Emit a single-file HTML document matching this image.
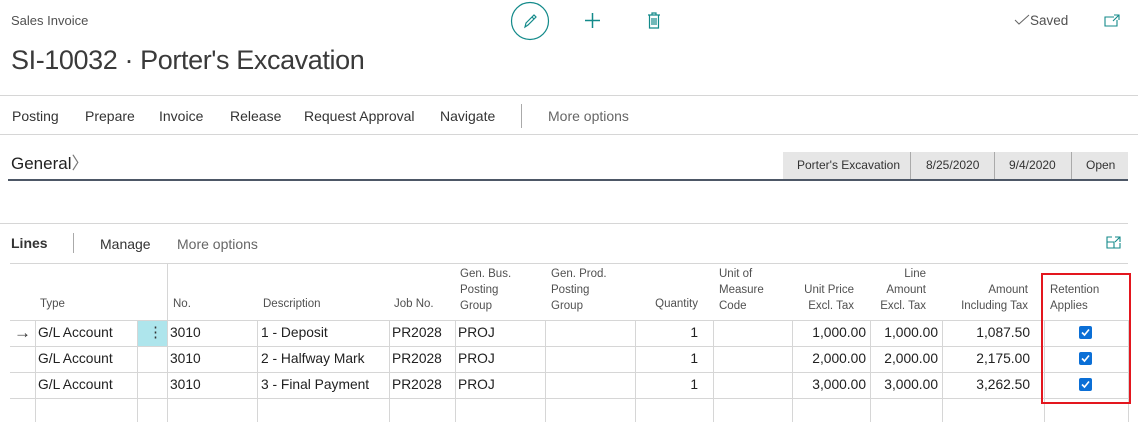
<!DOCTYPE html>
<html><head><meta charset="utf-8"><style>
*{margin:0;padding:0;box-sizing:border-box}
body{width:1138px;height:422px;overflow:hidden;background:#fff;font-family:"Liberation Sans",sans-serif;color:#212121;position:relative}
.a{position:absolute;white-space:nowrap}
.hl{position:absolute;height:1px;background:#d6d6d6}
.vl{position:absolute;width:1px;background:#d6d6d6}
.h{position:absolute;font-size:11.5px;color:#505050;line-height:16px}
.c{position:absolute;font-size:13.8px;line-height:26px}
.r{text-align:right}
</style></head><body>
<div class="a" style="left:11px;top:13px;font-size:13px;color:#505050">Sales Invoice</div>
<svg class="a" style="left:510px;top:1px" width="40" height="40"><circle cx="20" cy="20" r="18.5" fill="none" stroke="#138a8a" stroke-width="1.2"/><path d="M15 26 L16 22 L24 14 L26 16 L18 24 Z M22 16 L24 18" fill="none" stroke="#138a8a" stroke-width="1.2"/></svg>
<svg class="a" style="left:584px;top:12px" width="17" height="17"><path d="M8.5 1V16M1 8.5H16" stroke="#138a8a" stroke-width="1.5"/></svg>
<svg class="a" style="left:647px;top:12px" width="14" height="17"><path d="M1 3H13M5 3V1H9V3M2.5 3V16H11.5V3M5 6V13M7 6V13M9 6V13" fill="none" stroke="#138a8a" stroke-width="1.2"/></svg>
<svg class="a" style="left:1014px;top:14px" width="16" height="12"><path d="M1 6L5 10L15 1" fill="none" stroke="#666" stroke-width="1"/></svg>
<div class="a" style="left:1030px;top:13px;font-size:13.5px;color:#505050">Saved</div>
<svg class="a" style="left:1104px;top:14px" width="16" height="13"><path d="M10 3H1V12H13V6M10 1H15V6M15 1L9 7" fill="none" stroke="#138a8a" stroke-width="1.1"/></svg>
<div class="a" style="left:11px;top:45px;font-size:27px;color:#3a3a3a;letter-spacing:-0.4px">SI-10032 · Porter's Excavation</div>
<div class="hl" style="left:0;top:95px;width:1138px"></div>
<div class="a" style="left:12px;top:108px;font-size:14px;color:#333">Posting</div>
<div class="a" style="left:85px;top:108px;font-size:14px;color:#333">Prepare</div>
<div class="a" style="left:159px;top:108px;font-size:14px;color:#333">Invoice</div>
<div class="a" style="left:230px;top:108px;font-size:14px;color:#333">Release</div>
<div class="a" style="left:304px;top:108px;font-size:14px;color:#333">Request Approval</div>
<div class="a" style="left:440px;top:108px;font-size:14px;color:#333">Navigate</div>
<div class="vl" style="left:521px;top:104px;height:24px;background:#aaa"></div>
<div class="a" style="left:548px;top:108px;font-size:14px;color:#666">More options</div>
<div class="hl" style="left:0;top:134px;width:1138px"></div>
<div class="a" style="left:11px;top:154px;font-size:17px;color:#212121;line-height:20px">General<span style="color:#777">〉</span></div>
<div class="a" style="left:783px;top:152px;width:345px;height:27px;background:#e6e6e6;font-size:12px;color:#333;line-height:27px">
<span class="a" style="left:14px">Porter's Excavation</span>
<span class="a" style="left:127px;top:0;width:1px;height:27px;background:#aaa"></span>
<span class="a" style="left:143px">8/25/2020</span>
<span class="a" style="left:211px;top:0;width:1px;height:27px;background:#aaa"></span>
<span class="a" style="left:226px">9/4/2020</span>
<span class="a" style="left:288px;top:0;width:1px;height:27px;background:#aaa"></span>
<span class="a" style="left:303px">Open</span></div>
<div class="a" style="left:8px;top:179px;width:1120px;height:2px;background:#4d5766"></div>
<div class="hl" style="left:0;top:223px;width:1128px"></div>
<div class="a" style="left:11px;top:235px;font-size:14px;font-weight:bold;color:#333">Lines</div>
<div class="vl" style="left:73px;top:233px;height:20px;background:#aaa"></div>
<div class="a" style="left:100px;top:236px;font-size:14px;color:#333">Manage</div>
<div class="a" style="left:177px;top:236px;font-size:14px;color:#666">More options</div>
<svg class="a" style="left:1106px;top:236px" width="15" height="13"><path d="M6 1H1V12H14V7M1 6H8V12M9 1H14V6M14 1L9 6" fill="none" stroke="#138a8a" stroke-width="1.1"/></svg>
<div class="hl" style="left:10px;top:263px;width:1118px"></div>
<div class="a" style="left:137px;top:320px;width:30px;height:26px;background:#aee5ec"></div>
<div class="a" style="left:148px;top:320px;font-size:15px;line-height:26px;color:#333">⋮</div>
<div class="hl" style="left:10px;top:320px;width:1118px"></div>
<div class="hl" style="left:10px;top:346px;width:1118px"></div>
<div class="hl" style="left:10px;top:372px;width:1118px"></div>
<div class="hl" style="left:10px;top:398px;width:1118px"></div>
<div class="vl" style="left:35px;top:320px;height:102px"></div>
<div class="vl" style="left:137px;top:320px;height:102px"></div>
<div class="vl" style="left:167px;top:263px;height:159px"></div>
<div class="vl" style="left:257px;top:320px;height:102px"></div>
<div class="vl" style="left:389px;top:320px;height:102px"></div>
<div class="vl" style="left:455px;top:320px;height:102px"></div>
<div class="vl" style="left:545px;top:320px;height:102px"></div>
<div class="vl" style="left:635px;top:320px;height:102px"></div>
<div class="vl" style="left:713px;top:320px;height:102px"></div>
<div class="vl" style="left:792px;top:320px;height:102px"></div>
<div class="vl" style="left:870px;top:320px;height:102px"></div>
<div class="vl" style="left:942px;top:320px;height:102px"></div>
<div class="vl" style="left:1044px;top:320px;height:102px"></div>
<div class="vl" style="left:1128px;top:320px;height:102px"></div>
<div class="h" style="left:40px;top:296px">Type</div>
<div class="h" style="left:173px;top:296px">No.</div>
<div class="h" style="left:263px;top:296px">Description</div>
<div class="h" style="left:394px;top:296px">Job No.</div>
<div class="h" style="left:460px;top:266px">Gen. Bus.<br>Posting<br>Group</div>
<div class="h" style="left:551px;top:266px">Gen. Prod.<br>Posting<br>Group</div>
<div class="h r" style="left:636px;width:62px;top:296px">Quantity</div>
<div class="h" style="left:719px;top:266px">Unit of<br>Measure<br>Code</div>
<div class="h r" style="left:790px;width:64px;top:282px">Unit Price<br>Excl. Tax</div>
<div class="h r" style="left:860px;width:66px;top:266px">Line<br>Amount<br>Excl. Tax</div>
<div class="h r" style="left:940px;width:88px;top:282px">Amount<br>Including Tax</div>
<div class="h" style="left:1050px;top:282px">Retention<br>Applies</div>
<div class="a" style="left:14px;top:320px;font-size:17px;line-height:26px;color:#333">→</div>
<div class="c" style="left:38px;top:320px">G/L Account</div><div class="c" style="left:38px;top:346px">G/L Account</div><div class="c" style="left:38px;top:372px">G/L Account</div>
<div class="c" style="left:170px;top:320px">3010</div><div class="c" style="left:170px;top:346px">3010</div><div class="c" style="left:170px;top:372px">3010</div>
<div class="c" style="left:261px;top:320px">1 - Deposit</div><div class="c" style="left:261px;top:346px">2 - Halfway Mark</div><div class="c" style="left:261px;top:372px">3 - Final Payment</div>
<div class="c" style="left:392px;top:320px">PR2028</div><div class="c" style="left:392px;top:346px">PR2028</div><div class="c" style="left:392px;top:372px">PR2028</div>
<div class="c" style="left:458px;top:320px">PROJ</div><div class="c" style="left:458px;top:346px">PROJ</div><div class="c" style="left:458px;top:372px">PROJ</div>
<div class="c r" style="left:640px;width:58px;top:320px">1</div><div class="c r" style="left:640px;width:58px;top:346px">1</div><div class="c r" style="left:640px;width:58px;top:372px">1</div>
<div class="c r" style="left:792px;width:74px;top:320px">1,000.00</div><div class="c r" style="left:792px;width:74px;top:346px">2,000.00</div><div class="c r" style="left:792px;width:74px;top:372px">3,000.00</div>
<div class="c r" style="left:868px;width:70px;top:320px">1,000.00</div><div class="c r" style="left:868px;width:70px;top:346px">2,000.00</div><div class="c r" style="left:868px;width:70px;top:372px">3,000.00</div>
<div class="c r" style="left:942px;width:88px;top:320px">1,087.50</div><div class="c r" style="left:942px;width:88px;top:346px">2,175.00</div><div class="c r" style="left:942px;width:88px;top:372px">3,262.50</div>
<svg class="a" style="left:1079px;top:326px" width="13" height="13"><rect width="13" height="13" rx="2" fill="#0b6fd6"/><path d="M3 6.5L5.5 9L10 3.5" fill="none" stroke="#fff" stroke-width="1.6"/></svg>
<svg class="a" style="left:1079px;top:352px" width="13" height="13"><rect width="13" height="13" rx="2" fill="#0b6fd6"/><path d="M3 6.5L5.5 9L10 3.5" fill="none" stroke="#fff" stroke-width="1.6"/></svg>
<svg class="a" style="left:1079px;top:378px" width="13" height="13"><rect width="13" height="13" rx="2" fill="#0b6fd6"/><path d="M3 6.5L5.5 9L10 3.5" fill="none" stroke="#fff" stroke-width="1.6"/></svg>
<div class="a" style="left:1041px;top:273px;width:90px;height:131px;border:2px solid #e3161e"></div>
</body></html>
